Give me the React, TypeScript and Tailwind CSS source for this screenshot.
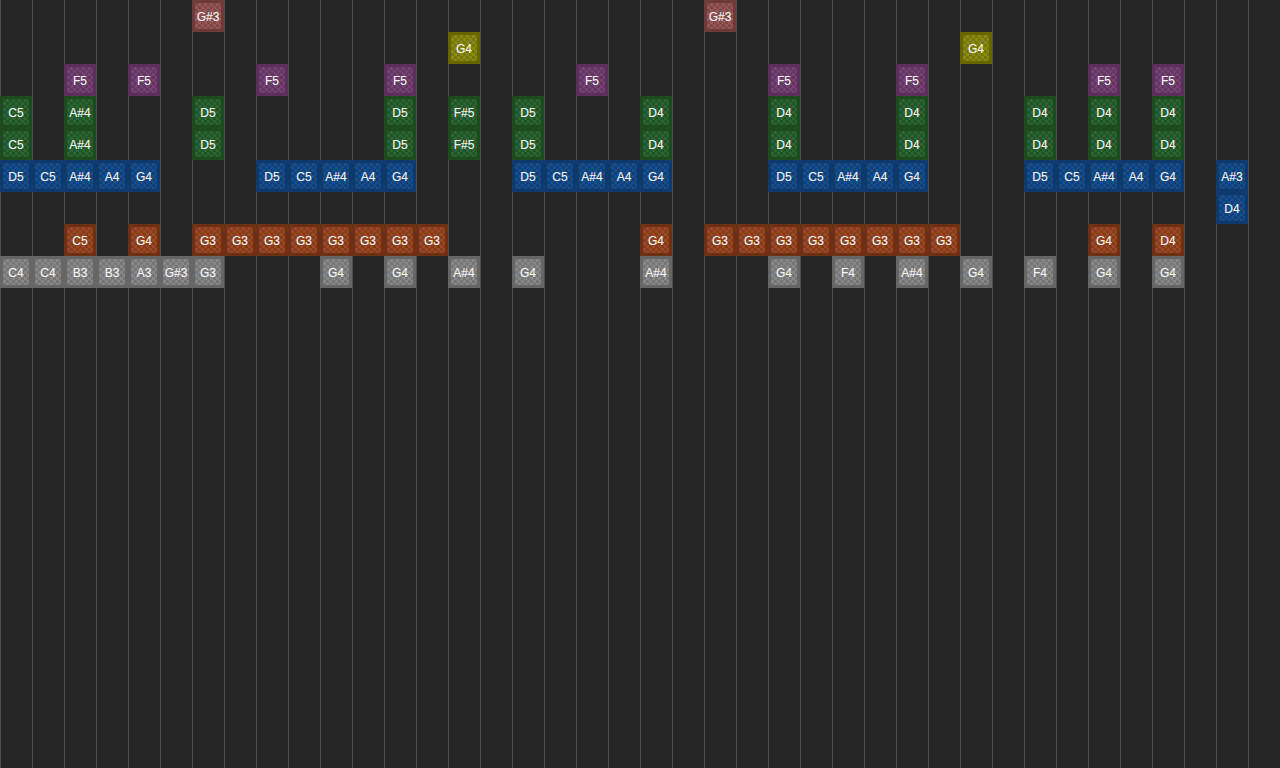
const COLS = 40;

type Note = [number, string];

const purple = "border-[#5a2f5a] bg-[conic-gradient(#734272_25%,#643763_0_50%,#734272_0_75%,#643763_0)]";
const rose = "border-[#6e3a3a] bg-[conic-gradient(#945656_25%,#824848_0_50%,#945656_0_75%,#824848_0)]";
const olive = "border-[#666600] bg-[conic-gradient(#8a8a12_25%,#76760c_0_50%,#8a8a12_0_75%,#76760c_0)]";
const green = "border-[#1e4a22] bg-[conic-gradient(#2b6431_25%,#245529_0_50%,#2b6431_0_75%,#245529_0)]";
const blue = "border-[#0f3a6b] bg-[conic-gradient(#174d8c_25%,#12427a_0_50%,#174d8c_0_75%,#12427a_0)]";
const orange = "border-[#6e3015] bg-[conic-gradient(#984822_25%,#843c1a_0_50%,#984822_0_75%,#843c1a_0)]";
const grey = "border-[#666666] bg-[conic-gradient(#888888_25%,#777777_0_50%,#888888_0_75%,#777777_0)]";

const topGreen: Note[] = [
  [0, "C5"], [2, "A#4"], [6, "D5"], [12, "D5"], [14, "F#5"], [16, "D5"],
  [20, "D4"], [24, "D4"], [28, "D4"], [32, "D4"], [34, "D4"], [36, "D4"],
];

const run = (start: number): Note[] => [
  [start, "D5"], [start + 1, "C5"], [start + 2, "A#4"], [start + 3, "A4"], [start + 4, "G4"],
];

const g3s = (start: number): Note[] =>
  Array.from({ length: 8 }, (_, i): Note => [start + i, "G3"]);

const rows: { color: string; notes: Note[] }[] = [
  { color: rose, notes: [[6, "G#3"], [22, "G#3"]] },
  { color: olive, notes: [[14, "G4"], [30, "G4"]] },
  { color: purple, notes: [2, 4, 8, 12, 18, 24, 28, 34, 36].map((c): Note => [c, "F5"]) },
  { color: green, notes: topGreen },
  { color: green, notes: topGreen },
  { color: blue, notes: [...run(0), ...run(8), ...run(16), ...run(24), ...run(32), [38, "A#3"]] },
  { color: blue, notes: [[38, "D4"]] },
  { color: orange, notes: [[2, "C5"], [4, "G4"], ...g3s(6), [20, "G4"], ...g3s(22), [34, "G4"], [36, "D4"]] },
  {
    color: grey,
    notes: [
      [0, "C4"], [1, "C4"], [2, "B3"], [3, "B3"], [4, "A3"], [5, "G#3"], [6, "G3"],
      [10, "G4"], [12, "G4"], [14, "A#4"], [16, "G4"], [20, "A#4"], [24, "G4"],
      [26, "F4"], [28, "A#4"], [30, "G4"], [32, "F4"], [34, "G4"], [36, "G4"],
    ],
  },
];

export default function App() {
  return (
    <div className="h-[768px] w-[1280px] overflow-hidden bg-[#262627] bg-[linear-gradient(90deg,#505050_1px,transparent_1px)] bg-[length:32px_32px] font-['Liberation_Sans',Arial,sans-serif]">
      {rows.map((row, r) => (
        <div key={r} className="grid h-8 grid-cols-[repeat(40,32px)]">
          {Array.from({ length: COLS }, (_, c) => {
            const note = row.notes.find((n) => n[0] === c);
            if (!note) return <div key={c} />;
            return (
              <div
                key={c}
                className={`flex h-8 w-8 items-center justify-center border-[3px] bg-[length:6px_6px] pt-0.5 text-xs text-[#f4f4f4] [-webkit-text-stroke:0.1px_#f4f4f4] ${row.color}`}
              >
                {note[1]}
              </div>
            );
          })}
        </div>
      ))}
    </div>
  );
}
